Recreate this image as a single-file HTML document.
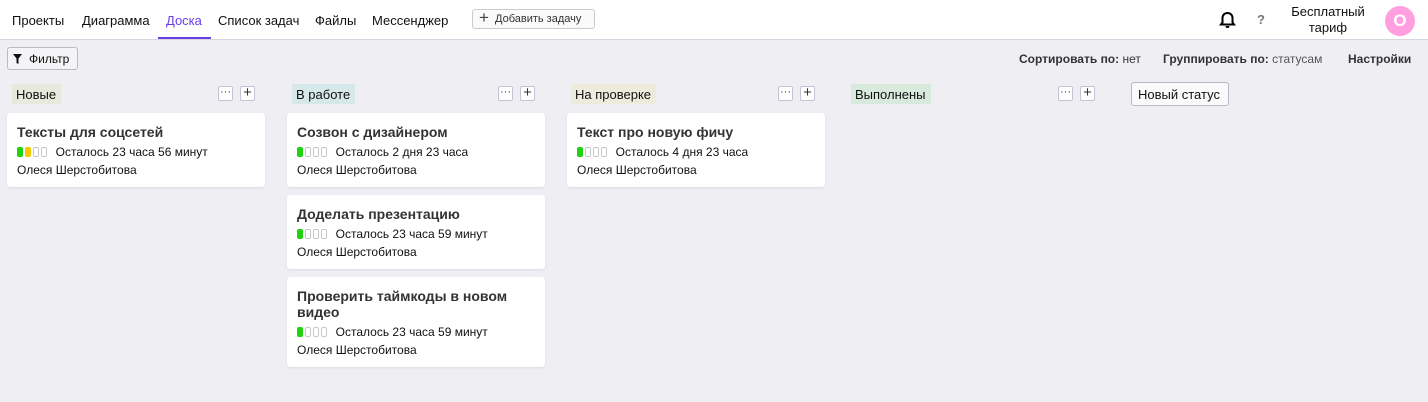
<!DOCTYPE html>
<html><head><meta charset="utf-8"><style>
*{box-sizing:border-box;margin:0;padding:0}
body{width:1428px;height:402px;background:#eeeef3;font-family:"Liberation Sans",sans-serif;font-size:13px;color:#111;position:relative;overflow:hidden}
.hdr{position:absolute;left:0;top:0;width:1428px;height:40px;background:#fff;border-bottom:1px solid #d4d6e0}
.nav{position:absolute;top:13px;font-size:13px}
.act{color:#6a3de8}
.uline{position:absolute;left:158px;top:37px;width:53px;height:2px;background:#6a3de8}
.add{position:absolute;left:472px;top:9px;width:123px;height:20px;border:1px solid #c8cad4;border-radius:3px;font-size:11px;color:#333;padding:3px 0 0 22px;background:#fafafa}
.add:before{content:"+";position:absolute;left:6px;top:-2px;font-size:17px;color:#444}
.abs{position:absolute}
.filt{left:7px;top:47px;width:71px;height:23px;border:1px solid #b8bac4;border-radius:3px;background:#f4f4f6;font-size:12px;padding:4px 0 0 21px}
.lbl{position:absolute;top:84px;height:20px;padding:3px 5px 0 4px;font-size:13px}
.ib{position:absolute;top:86px;width:15px;height:15px;border:1px solid #c0c4d4;border-radius:2px;background:#fff;font-size:11px;text-align:center;line-height:11px;color:#333}
.card{position:absolute;width:258px;background:#fff;border-radius:3px;box-shadow:0 1px 2px rgba(0,0,0,.08);padding:11px 10px 0 10px}
.t{font-weight:bold;font-size:14px;color:#333;line-height:16px;margin-bottom:2px}
.p{font-size:12px;height:19px;display:flex;align-items:center}
.d{display:inline-block;width:6px;height:10px;border-radius:2px;margin-right:2px;border:1px solid #c8c8c8}
.g{background:#1fd40f;border-color:#1fd40f}.y{background:#f5c800;border-color:#f5c800}
.n{font-size:12px;margin-top:2px}
</style></head><body>
<div class="hdr">
<span class="nav" style="left:12px">Проекты</span>
<span class="nav" style="left:82px">Диаграмма</span>
<span class="nav act" style="left:166px">Доска</span>
<span class="nav" style="left:218px">Список задач</span>
<span class="nav" style="left:315px">Файлы</span>
<span class="nav" style="left:372px">Мессенджер</span>
<div class="uline"></div>
<div class="add">Добавить задачу</div>
<svg class="abs" style="left:1219px;top:11px" width="17" height="18" viewBox="0 0 17 18"><path d="M8.5 2c-3 0-5 2.3-5 5v4.5L2 13.5h13l-1.5-2V7c0-2.7-2-5-5-5z" fill="none" stroke="#000" stroke-width="2"/><path d="M6.5 15a2 2 0 0 0 4 0z" fill="#000"/></svg>
<span class="abs" style="left:1257px;top:12px;font-weight:bold;color:#777;font-size:13px">?</span>
<div class="abs" style="left:1288px;top:4px;width:80px;text-align:center;font-size:13px;line-height:16px">Бесплатный<br>тариф</div>
<div class="abs" style="left:1385px;top:6px;width:30px;height:30px;border-radius:50%;background:#ff9fdf;color:#fff;font-size:17px;font-weight:bold;text-align:center;line-height:30px">O</div>
</div>
<div class="abs filt">Фильтр</div>
<svg class="abs" style="left:13px;top:54px" width="9" height="10" viewBox="0 0 9 10"><path d="M0 0h9L5.5 4.5V10L3.5 9V4.5z" fill="#111"/></svg>
<div class="abs" style="left:1019px;top:52px;font-size:12px;color:#333"><b>Сортировать по:</b> нет</div>
<div class="abs" style="left:1163px;top:52px;font-size:12px;color:#333"><b>Группировать по:</b> <span style="color:#555">статусам</span></div>
<div class="abs" style="left:1348px;top:52px;font-size:12px;color:#333"><b>Настройки</b></div>

<div class="lbl" style="left:12px;background:#e6e9dc">Новые</div>
<div class="ib" style="left:218px">···</div><div class="ib" style="left:240px;font-size:15px">+</div>
<div class="lbl" style="left:292px;background:#d6e8ea">В работе</div>
<div class="ib" style="left:498px">···</div><div class="ib" style="left:520px;font-size:15px">+</div>
<div class="lbl" style="left:571px;background:#ecebdc">На проверке</div>
<div class="ib" style="left:778px">···</div><div class="ib" style="left:800px;font-size:15px">+</div>
<div class="lbl" style="left:851px;background:#d7eadb">Выполнены</div>
<div class="ib" style="left:1058px">···</div><div class="ib" style="left:1080px;font-size:15px">+</div>
<div class="abs" style="left:1131px;top:82px;width:98px;height:24px;border:1px solid #b8bac4;border-radius:3px;background:#fafafa;font-size:13px;padding:4px 0 0 6px">Новый статус</div>

<div class="card" style="left:7px;top:113px;height:74px"><div class="t">Тексты для соцсетей</div><div class="p"><i class="d g"></i><i class="d y"></i><i class="d"></i><i class="d"></i>&nbsp; Осталось 23 часа 56 минут</div><div class="n">Олеся Шерстобитова</div></div>
<div class="card" style="left:287px;top:113px;height:74px"><div class="t">Созвон с дизайнером</div><div class="p"><i class="d g"></i><i class="d"></i><i class="d"></i><i class="d"></i>&nbsp; Осталось 2 дня 23 часа</div><div class="n">Олеся Шерстобитова</div></div>
<div class="card" style="left:287px;top:195px;height:74px"><div class="t">Доделать презентацию</div><div class="p"><i class="d g"></i><i class="d"></i><i class="d"></i><i class="d"></i>&nbsp; Осталось 23 часа 59 минут</div><div class="n">Олеся Шерстобитова</div></div>
<div class="card" style="left:287px;top:277px;height:90px"><div class="t">Проверить таймкоды в новом видео</div><div class="p"><i class="d g"></i><i class="d"></i><i class="d"></i><i class="d"></i>&nbsp; Осталось 23 часа 59 минут</div><div class="n">Олеся Шерстобитова</div></div>
<div class="card" style="left:567px;top:113px;height:74px"><div class="t">Текст про новую фичу</div><div class="p"><i class="d g"></i><i class="d"></i><i class="d"></i><i class="d"></i>&nbsp; Осталось 4 дня 23 часа</div><div class="n">Олеся Шерстобитова</div></div>
</body></html>
